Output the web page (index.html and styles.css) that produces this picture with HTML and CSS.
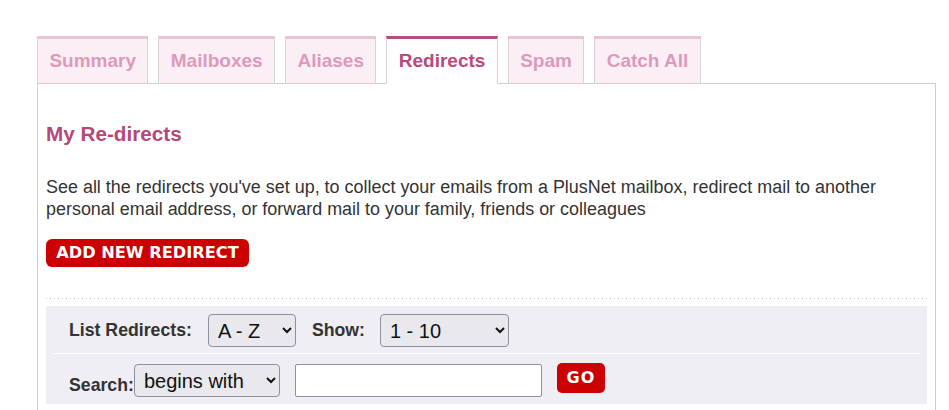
FILE: index.html
```html
<!DOCTYPE html>
<html lang="en">
<head>
<meta charset="utf-8">
<title>My Re-directs</title>
<link rel="stylesheet" href="styles.css">
</head>
<body>
<div class="page">
  <ul class="tabs">
    <li class="tab">Summary</li>
    <li class="tab">Mailboxes</li>
    <li class="tab">Aliases</li>
    <li class="tab active">Redirects</li>
    <li class="tab">Spam</li>
    <li class="tab">Catch All</li>
  </ul>
  <div class="content">
    <h1 class="title">My Re-directs</h1>
    <p class="intro">See all the redirects you've set up, to collect your emails from a PlusNet mailbox, redirect mail to another personal email address, or forward mail to your family, friends or colleagues</p>
    <a class="btn-add" href="#">ADD NEW REDIRECT</a>
    <div class="dots"></div>
    <div class="filters">
      <div class="row row-list">
        <label class="lbl lbl-list">List Redirects:</label>
        <select class="sel sel-order"><option>A - Z</option><option>Z - A</option></select>
        <label class="lbl lbl-show">Show:</label>
        <select class="sel sel-show"><option>1 - 10</option><option>1 - 25</option></select>
      </div>
      <div class="row row-search">
        <label class="lbl">Search:</label>
        <select class="sel sel-mode"><option>begins with</option><option>contains</option></select>
        <input class="txt" type="text">
        <a class="btn-go" href="#">GO</a>
      </div>
    </div>
  </div>
</div>
</body>
</html>
```

FILE: styles.css
```css
html, body {
  margin: 0;
  padding: 0;
  background: #ffffff;
}

body {
  font-family: "Liberation Sans", Arial, sans-serif;
  color: #333333;
}

.page {
  padding: 36px 0 0 37px;
  width: 899px;
}

.tabs {
  list-style: none;
  margin: 0 0 -1px 0;
  padding: 0;
  display: flex;
  gap: 10px;
  position: relative;
  z-index: 1;
}

.tab {
  box-sizing: border-box;
  height: 48px;
  padding: 0 11.4px;
  line-height: 44px;
  font-size: 19px;
  font-weight: bold;
  color: #dd9abb;
  background: #fbeff5;
  border-top: 3px solid #eac3d4;
  border-left: 1px solid #d4d4d4;
  border-right: 1px solid #d4d4d4;
  border-bottom: 1px solid #cfcfcf;
}

.tab.active {
  color: #b94a7c;
  background: #ffffff;
  border-top-color: #b94a7c;
  border-bottom-color: #ffffff;
}

.content {
  border: 1px solid #cfcfcf;
  padding: 0 8px 30px 8px;
}

.title {
  margin: 38px 0 0 0;
  font-size: 20.7px;
  line-height: 24px;
  font-weight: bold;
  color: #b5477b;
}

.intro {
  margin: 30px 0 0 0;
  font-size: 17.95px;
  line-height: 22px;
  color: #333333;
}

.btn-add {
  display: block;
  width: 203px;
  height: 28px;
  margin-top: 19px;
  box-sizing: border-box;
  background: #cc0000;
  border-radius: 6px;
  color: #ffffff;
  text-decoration: none;
  text-align: center;
  font-family: "DejaVu Sans", sans-serif;
  font-weight: bold;
  font-size: 16.2px;
  line-height: 28px;
}

.dots {
  margin-top: 31px;
  height: 1px;
  background-image: linear-gradient(to right, #c8c8c8 1px, transparent 1px);
  background-size: 4px 1px;
}

.filters {
  margin-top: 7px;
  background: #efeef4;
  padding: 8px 0 7px 0;
}

.row {
  display: flex;
  align-items: center;
  height: 33px;
}

.row-list {
  padding-left: 23px;
}

.row-search {
  margin: 6px 7px 0 7px;
  border-top: 1px solid #ffffff;
  padding: 10px 0 0 16px;
  align-items: flex-start;
}

.lbl {
  font-size: 17.7px;
  font-weight: bold;
  color: #333333;
}

.row-search .lbl {
  align-self: center;
  margin-top: 10px;
}

.lbl-list {
  margin-right: 16px;
}

.lbl-show {
  margin: 0 15px 0 16px;
}

.sel {
  box-sizing: border-box;
  height: 33px;
  font-family: "Liberation Sans", Arial, sans-serif;
  font-size: 20px;
  color: #111111;
  background-color: #e9e9ed;
  border: 1px solid #8f8f9d;
  border-radius: 4px;
  padding: 0 4px 0 5px;
}

.sel-order { width: 88px; }
.sel-show { width: 129px; }
.sel-mode { width: 146px; }

.txt {
  box-sizing: border-box;
  width: 247px;
  height: 33px;
  margin-left: 15px;
  border: 1px solid #8f8f9d;
  border-radius: 2px;
  background: #ffffff;
  font-size: 18px;
  padding: 0 4px;
}

.btn-go {
  display: block;
  width: 48px;
  height: 30px;
  margin: -1px 0 0 15px;
  background: #cc0000;
  border-radius: 5px;
  color: #ffffff;
  text-decoration: none;
  text-align: center;
  font-family: "DejaVu Sans", sans-serif;
  font-weight: bold;
  font-size: 16px;
  letter-spacing: 1px;
  line-height: 30px;
}
```
